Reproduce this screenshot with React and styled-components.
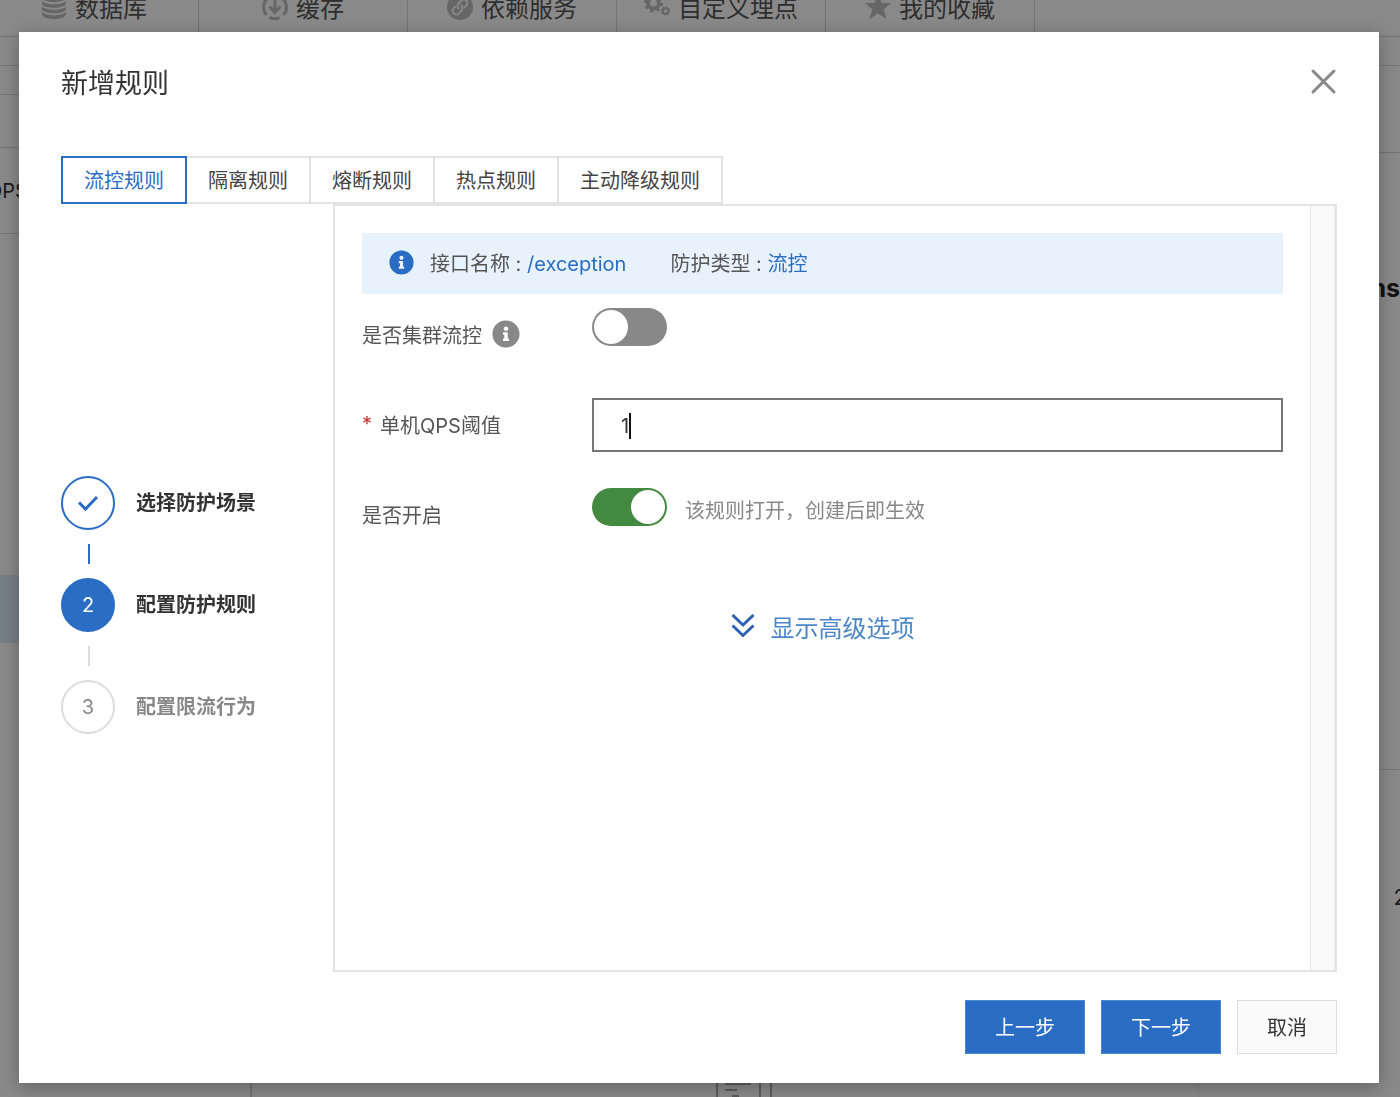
import React, { useState } from 'react';
import styled, { createGlobalStyle } from 'styled-components';
import { FaInfoCircle } from 'react-icons/fa';

const blue = '#2a6dc4';
const line = '#e3e3e3';

const GlobalStyle = createGlobalStyle`
  * {
    box-sizing: border-box;
  }
  body {
    margin: 0;
    overflow: hidden;
    font-family: Inter, 'Noto Sans CJK SC', sans-serif;
    font-size: 20px;
    color: #333;
  }
  button, input {
    font: inherit;
  }
`;

/* ---------- page behind the dialog ---------- */

const Page = styled.div`
  height: 100vh;
  overflow: hidden;
  display: flex;
  flex-direction: column;
  background: #fdfdfd;
`;
const Nav = styled.nav`
  display: flex;
  flex-shrink: 0;
  height: 60px;
  margin: -23px 0 0 -10px;
  border-bottom: 1px solid #d4d4d4;
`;
const NavLink = styled.a`
  display: flex;
  align-items: center;
  justify-content: center;
  gap: 8px;
  width: 209px;
  border-right: 1px solid #d4d4d4;
  font-size: 24px;
  color: #555;
  text-decoration: none;
  white-space: nowrap;

  svg {
    width: 26px;
    height: 26px;
    flex-shrink: 0;
    color: #bcbcbc;
  }
`;
const Body = styled.div`
  flex: 1;
  display: flex;
  min-height: 0;
`;
const Sidebar = styled.div`
  width: 252px;
  border-right: 2px solid #d4d4d4;
`;
const Center = styled.div`
  flex: 1;
  display: flex;
  align-items: flex-end;
  justify-content: center;
  padding-left: 38px;
`;
const Aside = styled.div`
  width: 202px;
  border-left: 1px solid #ececec;
  text-align: right;
`;
const Row = styled.div`
  height: ${(props) => props.h}px;
  display: flex;
  align-items: center;
  justify-content: ${(props) => (props.end ? 'flex-end' : 'flex-start')};
  border-bottom: 1px solid ${(props) => (props.plain ? 'transparent' : '#d4d4d4')};
  background: ${(props) => (props.active ? '#dcebf8' : 'transparent')};
`;
const Metric = styled.span`
  margin-left: -13px;
`;
const Unit = styled.strong`
  font-size: 25px;
  color: #222;
`;
const Count = styled.span`
  font-size: 22px;
  margin-right: -7px;
`;

/* ---------- dialog ---------- */

const Backdrop = styled.div`
  position: fixed;
  inset: 0;
  display: flex;
  padding: 32px 21px 14px 19px;
  background: rgba(0, 0, 0, 0.46);
`;
const Modal = styled.section`
  flex: 1;
  display: flex;
  flex-direction: column;
  padding: 29px 42px 29px;
  background: #fff;
  box-shadow: 0 4px 18px rgba(0, 0, 0, 0.3);
`;
const Header = styled.header`
  display: flex;
  align-items: center;
  justify-content: space-between;
  height: 40px;
  margin-bottom: 55px;
`;
const Title = styled.h2`
  margin: 0;
  font-size: 27px;
  font-weight: 400;
`;
const CloseButton = styled.button`
  display: flex;
  padding: 0;
  border: 0;
  background: none;
  color: #888;
  cursor: pointer;
`;
const Tabs = styled.div`
  display: flex;
`;
const Tab = styled.button`
  position: relative;
  z-index: ${(props) => (props.$active ? 1 : 0)};
  height: 48px;
  padding: 0 21px 2px;
  border: 2px solid ${(props) => (props.$active ? blue : line)};
  background: #fff;
  color: ${(props) => (props.$active ? blue : '#444')};
  white-space: nowrap;
  cursor: pointer;

  & + & {
    margin-left: -2px;
  }
`;
const Content = styled.div`
  flex: 1;
  display: flex;
`;
const Steps = styled.ol`
  width: 272px;
  margin: 0;
  padding: 34px 0 0;
  display: flex;
  flex-direction: column;
  justify-content: center;
  list-style: none;
`;
const Step = styled.li`
  display: flex;
  align-items: center;
  gap: 21px;
  color: ${(props) => (props.$state === 'wait' ? '#888' : '#333')};
`;
const StepName = styled.span`
  padding-bottom: 3px;
  font-weight: 600;
`;
const StepLine = styled.li`
  width: 2px;
  height: 20px;
  margin: 14px 27px;
  background: ${(props) => (props.$done ? blue : '#ddd')};
`;
const circleColors = {
  done: `border-color: ${blue}; color: ${blue};`,
  current: `border-color: ${blue}; background: ${blue}; color: #fff;`,
  wait: 'border-color: #ddd; color: #888;',
};
const Circle = styled.span`
  display: flex;
  align-items: center;
  justify-content: center;
  width: 54px;
  height: 54px;
  border: 2px solid;
  border-radius: 50%;
  ${(props) => circleColors[props.$state]}
`;
const Panel = styled.div`
  flex: 1;
  display: flex;
  border: 2px solid ${line};
`;
const Form = styled.form`
  flex: 1;
  padding: 27px;
`;
const ScrollTrack = styled.div`
  width: 25px;
  border-left: 1px solid #e3e3e3;
  border-right: 1px solid #eee;
  background: #fafafa;
`;
const Notice = styled.div`
  display: flex;
  align-items: center;
  height: 61px;
  margin-bottom: 14px;
  padding: 0 27px 3px;
  background: #e8f2fd;
  color: #555;

  svg {
    width: 25px;
    height: 25px;
    margin-right: 16px;
    color: ${blue};
  }
`;
const NoticeItem = styled.span`
  margin-right: 44px;
  white-space: pre;

  b {
    font-weight: 400;
    color: ${blue};
  }
`;
const Field = styled.div`
  display: grid;
  grid-template-columns: 230px 1fr;
  height: 54px;
  margin-bottom: 36px;
`;
const Label = styled.label`
  display: flex;
  align-items: center;
  gap: 8px;
  padding-bottom: 2px;
  color: #555;

  svg {
    width: 28px;
    height: 28px;
    margin-left: 2px;
    color: #888;
  }
`;
const Required = styled.span`
  color: #c8352c;
`;
const Control = styled.div`
  display: flex;
  align-items: flex-start;
  gap: 18px;
  position: relative;
`;
const Switch = styled.input`
  appearance: none;
  width: 75px;
  height: 38px;
  margin: 0;
  padding: 2px;
  border-radius: 19px;
  background: #888;
  cursor: pointer;

  &::before {
    content: '';
    display: block;
    width: 34px;
    height: 34px;
    border-radius: 50%;
    background: #fff;
  }
  &:checked {
    background: #43893f;
  }
  &:checked::before {
    margin-left: auto;
  }
`;
const Help = styled.span`
  line-height: 46px;
  color: #888;
`;
const TextInput = styled.input`
  width: 100%;
  height: 54px;
  padding: 2px 27px 0;
  border: 2px solid #777;
  border-radius: 0;
  outline: none;
  color: #333;
  caret-color: transparent;
`;
const Caret = styled.span`
  position: absolute;
  top: 15px;
  left: 37px;
  width: 2px;
  height: 26px;
  background: #111;
`;
const MoreLink = styled.a`
  display: flex;
  align-items: center;
  justify-content: center;
  gap: 16px;
  height: 36px;
  margin-top: 66px;
  font-size: 24px;
  color: #4a86c8;
  text-decoration: none;
`;
const Footer = styled.footer`
  display: flex;
  justify-content: flex-end;
  gap: 16px;
  margin-top: 28px;
`;
const Button = styled.button`
  height: 54px;
  padding: 0 29px 2px;
  border: 1px solid ${(props) => (props.$primary ? '#4a86d0' : '#dcdcdc')};
  background: ${(props) => (props.$primary ? blue : '#fafafa')};
  color: ${(props) => (props.$primary ? '#fff' : '#333')};
  cursor: pointer;
`;

/* ---------- icons ---------- */

const DatabaseIcon = () => (
  <svg viewBox="0 0 26 26" fill="currentColor">
    <ellipse cx="13" cy="4" rx="12" ry="4" />
    <path d="M1 6.500c2 5 22 5 24 0v3.500c-2 5-22 5-24 0z" />
    <path d="M1 12c2 5 22 5 24 0v3.500c-2 5-22 5-24 0z" />
    <path d="M1 17.500c2 5 22 5 24 0v3c-2 6-22 6-24 0z" />
  </svg>
);
const CacheIcon = () => (
  <svg viewBox="0 0 26 26" fill="none" stroke="currentColor" strokeWidth="3">
    <path d="M8 2.800a11.500 11.500 0 0 0-3.500 18M7.500 23.200a11.500 11.500 0 0 0 10 .4M21.500 20.800a11.500 11.500 0 0 0-3.500-18" />
    <path d="M13 4v14M7.500 12.500l5.500 6 5.500-6" />
  </svg>
);
const ServiceIcon = () => (
  <svg viewBox="0 0 26 26">
    <circle cx="13" cy="13" r="13" fill="currentColor" />
    <g fill="none" stroke="#fdfdfd" strokeWidth="2" strokeLinecap="round">
      <path d="M11.500 14.500a4 4 0 0 1 0-5l2.500-2.800a3.600 3.600 0 0 1 5.400 4.800l-1.600 1.800" />
      <path d="M14.500 11.500a4 4 0 0 1 0 5L12 19.300a3.600 3.600 0 0 1-5.400-4.800l1.600-1.800" />
    </g>
  </svg>
);
const GearsIcon = () => (
  <svg viewBox="0 0 26 26" fill="none" stroke="currentColor">
    <circle cx="9.500" cy="9" r="5.500" strokeWidth="4" />
    <circle cx="9.500" cy="9" r="8" strokeWidth="3" strokeDasharray="3.140 3.140" />
    <circle cx="21.500" cy="17" r="2.800" strokeWidth="2" />
    <circle cx="21.500" cy="17" r="4" strokeWidth="1.500" strokeDasharray="1.570 1.570" />
  </svg>
);
const StarIcon = () => (
  <svg viewBox="0 0 26 26" fill="currentColor">
    <path d="M13 0l3.700 9H26l-7.300 6.200L21.500 25 13 19.500 4.500 25l2.800-9.800L0 9h9.300z" />
  </svg>
);
const DocIcon = () => (
  <svg width="60" height="16" viewBox="0 0 60 16" fill="none" stroke="#aaa" strokeWidth="2">
    <path d="M3 0v16M46 0v16M57 0v16M11 3h26M11 9h12M18 15h7" />
  </svg>
);
const CloseIcon = () => (
  <svg width="27" height="27" viewBox="0 0 27 27" fill="none" stroke="currentColor" strokeWidth="3" strokeLinecap="round">
    <path d="M3 3l21 21M24 3L3 24" />
  </svg>
);
const CheckIcon = () => (
  <svg width="22" height="18" viewBox="0 0 22 18" fill="none" stroke="currentColor" strokeWidth="3">
    <path d="M2 8.500l6.500 6.500L20 3" />
  </svg>
);
const DoubleDownIcon = () => (
  <svg width="24" height="24" viewBox="0 0 24 24" fill="none" stroke="#2f62b5" strokeWidth="3">
    <path d="M1.500 1l10.500 10L22.500 1M1.500 11.500l10.500 10 10.500-10" />
  </svg>
);

const navItems = [
  { name: '数据库', icon: <DatabaseIcon /> },
  { name: '缓存', icon: <CacheIcon /> },
  { name: '依赖服务', icon: <ServiceIcon /> },
  { name: '自定义埋点', icon: <GearsIcon /> },
  { name: '我的收藏', icon: <StarIcon /> },
];
const tabs = ['流控规则', '隔离规则', '熔断规则', '热点规则', '主动降级规则'];

const Background = () => (
  <Page>
    <Nav>
      {navItems.map((item) => (
        <NavLink href="#" key={item.name}>
          {item.icon}
          {item.name}
        </NavLink>
      ))}
    </Nav>
    <Body>
      <Sidebar>
        <Row h={29} />
        <Row h={29} />
        <Row h={53} />
        <Row h={86}>
          <Metric>QPS</Metric>
        </Row>
        <Row h={341} plain />
        <Row h={68} plain active />
      </Sidebar>
      <Center>
        <DocIcon />
      </Center>
      <Aside>
        <Row h={29} />
        <Row h={87} />
        <Row h={90} plain />
        <Row h={90} plain end>
          <Unit>ms</Unit>
        </Row>
        <Row h={437} />
        <Row h={254} plain end>
          <Count>2</Count>
        </Row>
      </Aside>
    </Body>
  </Page>
);

const App = () => {
  const [tab, setTab] = useState(tabs[0]);
  const [cluster, setCluster] = useState(false);
  const [enabled, setEnabled] = useState(true);
  const [qps, setQps] = useState('1');

  return (
    <>
      <GlobalStyle />
      <Background />
      <Backdrop>
        <Modal role="dialog" aria-labelledby="dialog-title">
          <Header>
            <Title id="dialog-title">新增规则</Title>
            <CloseButton type="button" aria-label="关闭">
              <CloseIcon />
            </CloseButton>
          </Header>
          <Tabs>
            {tabs.map((name) => (
              <Tab key={name} type="button" $active={name === tab} onClick={() => setTab(name)}>
                {name}
              </Tab>
            ))}
          </Tabs>
          <Content>
            <Steps>
              <Step $state="done">
                <Circle $state="done">
                  <CheckIcon />
                </Circle>
                <StepName>选择防护场景</StepName>
              </Step>
              <StepLine $done />
              <Step $state="current">
                <Circle $state="current">2</Circle>
                <StepName>配置防护规则</StepName>
              </Step>
              <StepLine />
              <Step $state="wait">
                <Circle $state="wait">3</Circle>
                <StepName>配置限流行为</StepName>
              </Step>
            </Steps>
            <Panel>
              <Form>
                <Notice>
                  <FaInfoCircle />
                  <NoticeItem>
                    接口名称 : <b>/exception</b>
                  </NoticeItem>
                  <NoticeItem>
                    防护类型 : <b>流控</b>
                  </NoticeItem>
                </Notice>
                <Field>
                  <Label htmlFor="cluster">
                    是否集群流控
                    <FaInfoCircle />
                  </Label>
                  <Control>
                    <Switch
                      id="cluster"
                      type="checkbox"
                      checked={cluster}
                      onChange={(e) => setCluster(e.target.checked)}
                    />
                  </Control>
                </Field>
                <Field>
                  <Label htmlFor="qps">
                    <Required>*</Required>
                    单机QPS阈值
                  </Label>
                  <Control>
                    <TextInput id="qps" value={qps} onChange={(e) => setQps(e.target.value)} />
                    <Caret />
                  </Control>
                </Field>
                <Field>
                  <Label htmlFor="enabled">是否开启</Label>
                  <Control>
                    <Switch
                      id="enabled"
                      type="checkbox"
                      checked={enabled}
                      onChange={(e) => setEnabled(e.target.checked)}
                    />
                    <Help>该规则打开，创建后即生效</Help>
                  </Control>
                </Field>
                <MoreLink href="#">
                  <DoubleDownIcon />
                  显示高级选项
                </MoreLink>
              </Form>
              <ScrollTrack />
            </Panel>
          </Content>
          <Footer>
            <Button type="button" $primary>
              上一步
            </Button>
            <Button type="button" $primary>
              下一步
            </Button>
            <Button type="button">取消</Button>
          </Footer>
        </Modal>
      </Backdrop>
    </>
  );
};

export default App;
